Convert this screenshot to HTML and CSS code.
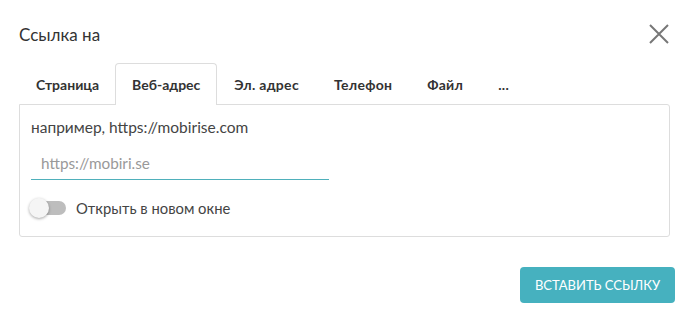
FILE: index.html
```html
<!DOCTYPE html>
<html lang="ru">
<head>
    <meta charset="UTF-8">
    <meta name="viewport" content="width=device-width, initial-scale=1.0">
    <title>Ссылка на</title>
    <link rel="stylesheet" href="styles.css">
</head>
<body>
    <div class="dialog">
        <div class="header">
            <div class="title">Ссылка на</div>
            <div class="close">
                <svg width="22" height="22" viewBox="0 0 22 22">
                    <path d="M2 2 L20 20 M20 2 L2 20" stroke="#777" stroke-width="2" fill="none"/>
                </svg>
            </div>
        </div>

        <div class="tabs">
            <div class="tab">Страница</div>
            <div class="tab active">Веб-адрес</div>
            <div class="tab">Эл. адрес</div>
            <div class="tab">Телефон</div>
            <div class="tab">Файл</div>
            <div class="tab">...</div>
        </div>

        <div class="panel">
            <div class="hint">например, https://mobirise.com</div>
            <input class="url" type="text" placeholder="https://mobiri.se">
            <label class="switch-row">
                <span class="switch"><span class="knob"></span></span>
                <span class="switch-label">Открыть в новом окне</span>
            </label>
        </div>

        <div class="footer">
            <div class="button">ВСТАВИТЬ ССЫЛКУ</div>
        </div>
    </div>
</body>
</html>
```

FILE: styles.css
```css
body {
    margin: 0;
    font-family: Lato, "Open Sans", sans-serif;
    background-color: #ffffff;
    color: #333;
}

.dialog {
    width: 684px;
    height: 316px;
}

.header {
    display: flex;
    justify-content: space-between;
    align-items: center;
    padding: 16px 14px 0 19px;
    height: 36px;
}

.title {
    font-size: 17px;
    color: #333;
}

.close {
    width: 22px;
    height: 22px;
}

.tabs {
    display: flex;
    margin: 11px 0 0 19px;
    height: 41px;
}

.tab {
    padding: 0 16px;
    font-size: 14px;
    font-weight: bold;
    color: #333;
    line-height: 42px;
    height: 40px;
    border: 1px solid transparent;
    border-bottom: none;
    border-radius: 4px 4px 0 0;
    position: relative;
}

.tab:first-child {
    padding-right: 15px;
}

.tab.active {
    border-color: #ddd;
    background-color: #fff;
    z-index: 1;
    height: 41px;
}

.tab.active ~ .tab {
    letter-spacing: 0.3px;
    padding-right: 17px;
}

.panel {
    margin: 0 14px 0 19px;
    height: 131px;
    border: 1px solid #ddd;
    border-radius: 0 3px 3px 3px;
    padding: 0 11px;
}

.hint {
    font-size: 15.5px;
    color: #444;
    margin-top: 13px;
}

.url {
    display: block;
    width: 288px;
    margin-top: 12px;
    padding: 6px 0 7px 10px;
    border: none;
    border-bottom: 1px solid #4fb0bb;
    font-family: inherit;
    font-size: 15.3px;
    outline: none;
}

.url::placeholder {
    color: #999;
}

.switch-row {
    display: flex;
    align-items: center;
    margin-top: 19px;
}

.switch {
    position: relative;
    width: 34px;
    height: 14px;
    margin-left: 1px;
    border-radius: 7px;
    background-color: #bdbdbd;
}

.knob {
    position: absolute;
    left: -3px;
    top: -3px;
    width: 20px;
    height: 20px;
    border-radius: 50%;
    background-color: #f5f5f5;
    box-shadow: 0 1px 3px rgba(0, 0, 0, 0.35);
}

.switch-label {
    margin-left: 10px;
    font-size: 14.8px;
    color: #444;
}

.footer {
    display: flex;
    justify-content: flex-end;
    padding: 30px 9px 0 0;
}

.button {
    width: 155px;
    height: 36px;
    line-height: 36px;
    text-align: center;
    border-radius: 4px;
    background-color: #46b1bf;
    color: #fff;
    font-size: 13px;
}
```
